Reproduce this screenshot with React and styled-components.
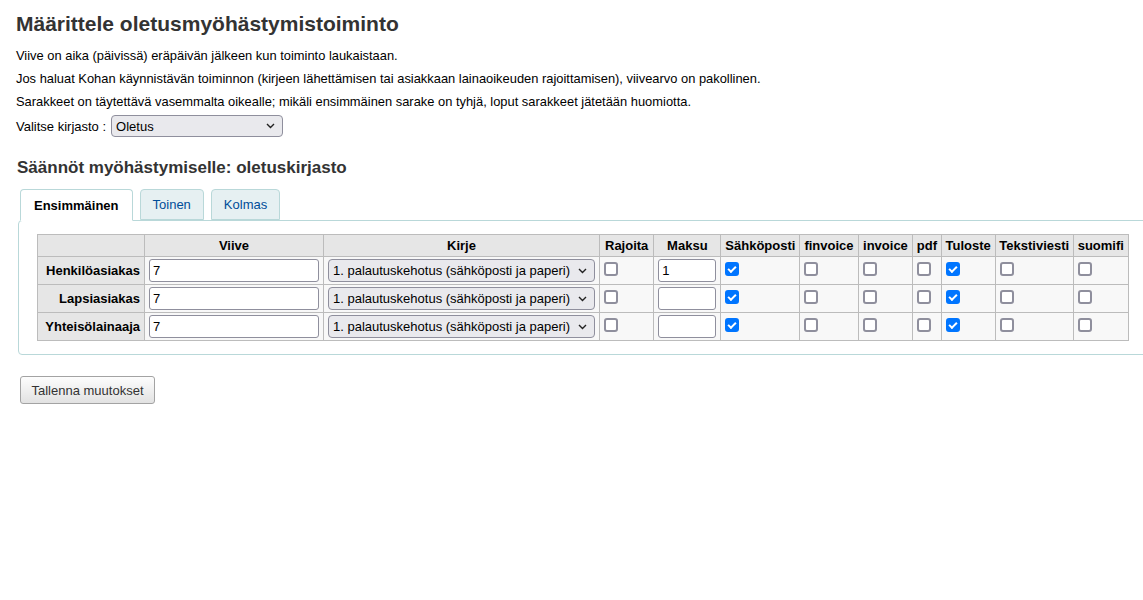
import React from "react";
import styled, { createGlobalStyle } from "styled-components";

const Global = createGlobalStyle`
  html, body { margin: 0; padding: 0; background: #fff; overflow: hidden; }
  body { font-family: "Liberation Sans", Arial, sans-serif; font-size: 13px; color: #000; }
`;

const Page = styled.div`
  padding: 8px 16px 0 16px;
  width: 1300px;
`;

const Title = styled.h1`
  font-size: 21px;
  font-weight: bold;
  color: #333;
  margin: 4px 0 12px 0;
`;

const Para = styled.p`
  margin: 0 0 8px 0;
  line-height: 15px;
  font-size: 12.9px;
`;

const LibRow = styled.div`
  display: flex;
  align-items: center;
  gap: 5px;
  margin-top: -2px;
  font-size: 13px;
`;

const SelectWrap = styled.span`
  position: relative;
  display: inline-block;
  line-height: 0;
`;

const NativeSelect = styled.select`
  appearance: none;
  -webkit-appearance: none;
  box-sizing: border-box;
  width: ${(p) => p.$w}px;
  height: ${(p) => p.$h}px;
  margin: 0;
  padding: 0 20px 0 4px;
  font-family: "Liberation Sans", Arial, sans-serif;
  font-size: 13px;
  color: #000;
  background: #e9e9ed;
  border: 1px solid #8f8f9d;
  border-radius: 4px;
`;

const Chevron = styled.svg`
  position: absolute;
  right: 8px;
  top: 50%;
  margin-top: -3px;
  width: 9px;
  height: 6px;
  pointer-events: none;
`;

const SubTitle = styled.h3`
  font-size: 17px;
  font-weight: bold;
  color: #333;
  margin: 21px 0 11px 1px;
`;

const Tabs = styled.div`
  margin-left: 2px;
`;

const TabList = styled.div`
  display: flex;
  gap: 7px;
  padding-left: 2px;
  position: relative;
  z-index: 1;
  margin-bottom: -1px;
`;

const Tab = styled.div`
  height: ${(p) => (p.$active ? 32 : 31)}px;
  box-sizing: border-box;
  padding: 0 ${(p) => (p.$active ? 13 : 12)}px;
  display: flex;
  align-items: center;
  font-size: 13px;
  border: 1px solid #b9d8d9;
  border-bottom: ${(p) => (p.$active ? "1px solid #fff" : "1px solid #b9d8d9")};
  border-radius: 4px 4px 0 0;
  background: ${(p) => (p.$active ? "#fff" : "#e6f0f2")};
  color: ${(p) => (p.$active ? "#000" : "#004d99")};
  font-weight: ${(p) => (p.$active ? "bold" : "normal")};
`;

const Panel = styled.div`
  border: 1px solid #b9d8d9;
  border-radius: 4px;
  padding: 13px 18px 13px 18px;
  width: 1200px;
`;

const Table = styled.table`
  border-collapse: collapse;
  font-size: 13px;
`;

const Th = styled.th`
  background: #e6e6e6;
  border: 1px solid #bcbcbc;
  padding: 0 ${(p) => p.$pad ?? 4}px;
  height: 21px;
  font-weight: bold;
  text-align: ${(p) => (p.$right ? "right" : "center")};
  white-space: nowrap;
`;

const Td = styled.td`
  background: #f8f8f8;
  border: 1px solid #bcbcbc;
  padding: 2px 4px;
  height: 23px;
  vertical-align: top;
  white-space: nowrap;
  line-height: 0;
`;

const TextIn = styled.input`
  box-sizing: border-box;
  width: ${(p) => p.$w}px;
  height: 23px;
  margin: 0;
  font-family: "Liberation Sans", Arial, sans-serif;
  font-size: 13px;
  padding: 1px 3px;
  border: 1px solid #8f8f9d;
  border-radius: 3px;
  background: #fff;
  color: #000;
`;

const Check = styled.input`
  appearance: none;
  -webkit-appearance: none;
  box-sizing: border-box;
  width: 14px;
  height: 14px;
  margin: 3px 0 0 0;
  border: 2px solid #8f8f9d;
  border-radius: 3px;
  background: #fff;
  display: inline-grid;
  place-content: center;
  &:checked {
    background: #0075ff;
    border-color: #0075ff;
  }
  &:checked::after {
    content: "";
    width: 6px;
    height: 3px;
    border-left: 2px solid #fff;
    border-bottom: 2px solid #fff;
    transform: translate(0, -1px) rotate(-45deg);
  }
`;

const SaveButton = styled.button`
  margin: 21px 0 0 4px;
  height: 28px;
  padding: 0 10.5px;
  font-family: "Liberation Sans", Arial, sans-serif;
  font-size: 13px;
  color: #333;
  background: linear-gradient(#fdfdfd, #e2e2e2);
  border: 1px solid #a3a3a3;
  border-radius: 3px;
`;

const cols = ["Rajoita", "Maksu", "Sähköposti", "finvoice", "invoice", "pdf", "Tuloste", "Tekstiviesti", "suomifi"];
const pads = { Rajoita: 5, invoice: 4.5, pdf: 3.5, Tekstiviesti: 3.5 };

const rows = [
  { name: "Henkilöasiakas", fee: "1" },
  { name: "Lapsiasiakas", fee: "" },
  { name: "Yhteisölainaaja", fee: "" },
];

const checked = { "Sähköposti": true, Tuloste: true };

function Select({ w, h, value }) {
  return (
    <SelectWrap>
      <NativeSelect $w={w} $h={h} defaultValue={value}>
        <option value={value}>{value}</option>
      </NativeSelect>
      <Chevron viewBox="0 0 9 6">
        <polyline points="1,1 4.5,4.5 8,1" fill="none" stroke="#222" strokeWidth="1.4" />
      </Chevron>
    </SelectWrap>
  );
}

export default function App() {
  return (
    <Page>
      <Global />
      <Title>Määrittele oletusmyöhästymistoiminto</Title>
      <Para>Viive on aika (päivissä) eräpäivän jälkeen kun toiminto laukaistaan.</Para>
      <Para>Jos haluat Kohan käynnistävän toiminnon (kirjeen lähettämisen tai asiakkaan lainaoikeuden rajoittamisen), viivearvo on pakollinen.</Para>
      <Para>Sarakkeet on täytettävä vasemmalta oikealle; mikäli ensimmäinen sarake on tyhjä, loput sarakkeet jätetään huomiotta.</Para>
      <LibRow>
        <span>Valitse kirjasto :</span>
        <Select w={172} h={22} value="Oletus" />
      </LibRow>
      <SubTitle>Säännöt myöhästymiselle: oletuskirjasto</SubTitle>
      <Tabs>
        <TabList>
          <Tab $active>Ensimmäinen</Tab>
          <Tab>Toinen</Tab>
          <Tab>Kolmas</Tab>
        </TabList>
        <Panel>
          <Table>
            <thead>
              <tr>
                <Th style={{ width: 98 }}></Th>
                <Th>Viive</Th>
                <Th>Kirje</Th>
                {cols.map((c) => (
                  <Th key={c} $pad={pads[c]}>{c}</Th>
                ))}
              </tr>
            </thead>
            <tbody>
              {rows.map((r) => (
                <tr key={r.name}>
                  <Th $right>{r.name}</Th>
                  <Td>
                    <TextIn $w={170} defaultValue="7" />
                  </Td>
                  <Td>
                    <Select w={267} h={23} value="1. palautuskehotus (sähköposti ja paperi)" />
                  </Td>
                  <Td>
                    <Check type="checkbox" />
                  </Td>
                  <Td>
                    <TextIn $w={58} defaultValue={r.fee} />
                  </Td>
                  {cols.slice(2).map((c) => (
                    <Td key={c}>
                      <Check type="checkbox" defaultChecked={!!checked[c]} />
                    </Td>
                  ))}
                </tr>
              ))}
            </tbody>
          </Table>
        </Panel>
      </Tabs>
      <SaveButton>Tallenna muutokset</SaveButton>
    </Page>
  );
}
